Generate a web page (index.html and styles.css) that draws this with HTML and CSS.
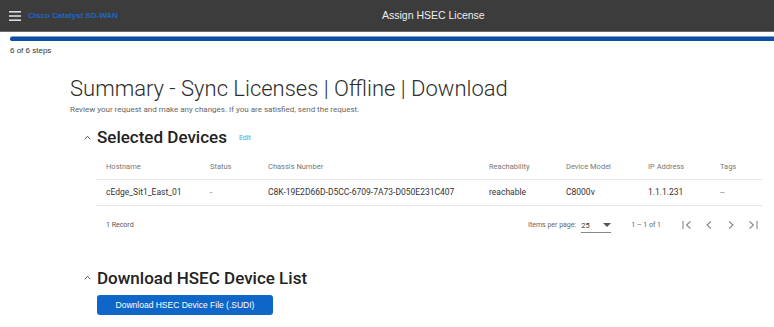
FILE: index.html
```html
<!DOCTYPE html>
<html>
<head>
<meta charset="utf-8">
<link rel="stylesheet" href="styles.css">
</head>
<body>
<header class="topbar">
  <div class="brand">
    <svg class="menu" width="12" height="10" viewBox="0 0 12 10"><rect x="0" y="0" width="12" height="1.6" fill="#ddd"/><rect x="0" y="4.2" width="12" height="1.6" fill="#ddd"/><rect x="0" y="8.4" width="12" height="1.6" fill="#ddd"/></svg>
    <span class="brand-name">Cisco Catalyst SD-WAN</span>
  </div>
  <div class="top-title">Assign HSEC License</div>
</header>
<div class="progress"><div class="progress-fill"></div></div>
<div class="steps">6 of 6 steps</div>
<main class="content">
  <h1 class="title">Summary - Sync Licenses | Offline | Download</h1>
  <p class="subtitle">Review your request and make any changes. If you are satisfied, send the request.</p>
  <section class="section">
    <div class="sec-head">
      <svg class="caret" width="7" height="5" viewBox="0 0 7 5"><path d="M0.8 4.2 L3.5 1.2 L6.2 4.2" stroke="#555" stroke-width="1" fill="none"/></svg>
      <h2>Selected Devices</h2>
      <a class="edit">Edit</a>
    </div>
    <table class="grid">
      <thead>
        <tr><th class="c1">Hostname</th><th class="c2">Status</th><th class="c3">Chassis Number</th><th class="c4">Reachability</th><th class="c5">Device Model</th><th class="c6">IP Address</th><th class="c7">Tags</th></tr>
      </thead>
      <tbody>
        <tr><td>cEdge_Sit1_East_01</td><td class="muted">-</td><td>C8K-19E2D66D-D5CC-6709-7A73-D050E231C407</td><td>reachable</td><td>C8000v</td><td>1.1.1.231</td><td class="muted">--</td></tr>
      </tbody>
    </table>
    <div class="footer">
      <span class="records">1 Record</span>
      <div class="pager">
        <span class="ipp">Items per page:</span>
        <span class="select">25<svg width="8" height="4" viewBox="0 0 8 4"><path d="M0 0 L8 0 L4 4 Z" fill="#555"/></svg></span>
        <span class="range">1 – 1 of 1</span>
        <span class="navs">
          <svg width="12" height="12" viewBox="0 0 12 12"><path d="M2 2 V10 M9.5 2.5 L5.5 6 L9.5 9.5" stroke="#888" stroke-width="1.1" fill="none"/></svg>
          <svg width="12" height="12" viewBox="0 0 12 12"><path d="M8 2.5 L4 6 L8 9.5" stroke="#888" stroke-width="1.1" fill="none"/></svg>
          <svg width="12" height="12" viewBox="0 0 12 12"><path d="M4 2.5 L8 6 L4 9.5" stroke="#888" stroke-width="1.1" fill="none"/></svg>
          <svg width="12" height="12" viewBox="0 0 12 12"><path d="M2.5 2.5 L6.5 6 L2.5 9.5 M10 2 V10" stroke="#888" stroke-width="1.1" fill="none"/></svg>
        </span>
      </div>
    </div>
  </section>
  <section class="section dl">
    <div class="sec-head">
      <svg class="caret" width="7" height="5" viewBox="0 0 7 5"><path d="M0.8 4.2 L3.5 1.2 L6.2 4.2" stroke="#555" stroke-width="1" fill="none"/></svg>
      <h2>Download HSEC Device List</h2>
    </div>
    <button class="btn">Download HSEC Device File (.SUDI)</button>
  </section>
</main>
</body>
</html>
```
FILE: styles.css
```css
* { box-sizing: border-box; }
body {
  margin: 0;
  font-family: Roboto, "Liberation Sans", sans-serif;
  background: #fff;
  color: #333;
  overflow: hidden;
}
.topbar {
  height: 32px;
  background: #3c3c3c;
  border-bottom: 1px solid #6a6a6a;
  display: flex;
  align-items: center;
  position: relative;
}
.brand {
  display: flex;
  align-items: center;
  padding-left: 9px;
  gap: 7px;
}
.brand-name {
  font-family: "Liberation Sans", Arial, sans-serif;
  font-size: 8px;
  font-weight: bold;
  color: #1f66c1;
}
.top-title {
  position: absolute;
  left: 382px;
  top: 9px;
  font-family: "Liberation Sans", Arial, sans-serif;
  font-size: 10.5px;
  color: #eee;
}
.progress {
  margin-top: 4px;
  margin-left: 10px;
  height: 5px;
  background: #7aa1d1;
  border-radius: 3px 0 0 3px;
  padding: 0.5px 0;
}
.progress-fill {
  height: 4px;
  background: #0b4ea3;
  border-radius: 3px 0 0 3px;
}
.steps {
  font-family: "Liberation Sans", Arial, sans-serif;
  font-size: 8px;
  color: #333;
  margin: 5px 0 0 10px;
}
.content {
  padding-left: 70px;
}
.title {
  margin: 20px 0 0;
  font-weight: 300;
  font-size: 22px;
  color: #2e2e2e;
  line-height: 28px;
}
.subtitle {
  margin: 2px 0 0;
  font-size: 8px;
  color: #666;
}
.section {
  margin-left: 14px;
}
.sec-head {
  display: flex;
  align-items: center;
  margin-top: 12px;
}
.caret {
  margin-right: 6px;
}
.sec-head h2 {
  margin: 0;
  font-family: Roboto, "Liberation Sans", sans-serif;
  font-size: 17px;
  font-weight: 500;
  color: #222;
  line-height: 22px;
}
.edit {
  font-size: 7px;
  color: #4aa3df;
  margin-left: 12px;
  margin-top: 2px;
}
.grid {
  margin-left: 12px;
  margin-top: 6px;
  width: 666px;
  border-collapse: collapse;
  font-size: 7.5px;
}
.grid th {
  text-align: left;
  font-weight: 400;
  color: #777;
  height: 25px;
  padding: 0 0 0 10px;
  border-bottom: 1px solid #e6e6e6;
}
.grid td {
  height: 26px;
  padding: 0 0 0 10px;
  color: #333;
  font-size: 8.5px;
  border-bottom: 1px solid #e6e6e6;
}
.grid td.muted { color: #888; }
.c1 { width: 104px; }
.c2 { width: 58px; }
.c3 { width: 221px; }
.c4 { width: 77px; }
.c5 { width: 82px; }
.c6 { width: 72px; }
.footer {
  display: flex;
  align-items: center;
  justify-content: space-between;
  margin-left: 12px;
  width: 666px;
  height: 38px;
  font-size: 7px;
  color: #555;
}
.records { padding-left: 10px; }
.pager {
  display: flex;
  align-items: center;
  margin-right: 3px;
}
.ipp { color: #666; }
.select {
  display: inline-flex;
  align-items: center;
  justify-content: space-between;
  width: 30px;
  margin-left: 5px;
  font-size: 7.5px;
  color: #333;
  border-bottom: 1px solid #888;
  padding-bottom: 2px;
  margin-top: 4px;
}
.range { margin-left: 20px; color: #666; }
.navs {
  display: flex;
  gap: 10px;
  margin-left: 20px;
}
.dl .sec-head { margin-top: 23px; }
.btn {
  margin-left: 13px;
  margin-top: 6px;
  width: 176px;
  height: 20px;
  border: none;
  border-radius: 3px;
  background: #0e66c9;
  color: #fff;
  font-family: "Liberation Sans", Arial, sans-serif;
  font-size: 8.5px;
}
```
